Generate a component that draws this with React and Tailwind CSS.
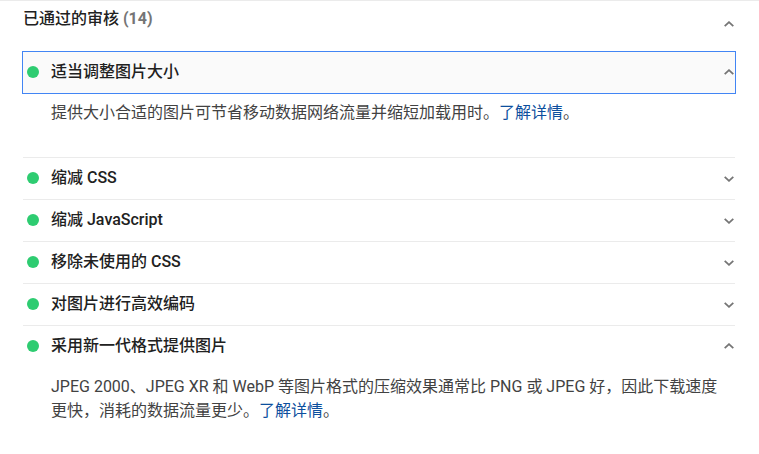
import React, { useState } from "react";

function Chevron({ up }) {
  return (
    <svg viewBox="0 0 10 6" className="mr-px h-1.5 w-2.5 shrink-0" fill="none" stroke="#757575" strokeWidth="1.8" aria-hidden="true">
      <path d={up ? "M0.7 5.2 5 1.2 9.3 5.2" : "M0.7 0.8 5 4.8 9.3 0.8"} />
    </svg>
  );
}

function LearnMore() {
  return (
    <a href="#learn" className="text-[#0d4f9e]">了解详情</a>
  );
}

const audits = [
  {
    title: "适当调整图片大小",
    open: true,
    active: true,
    body: "提供大小合适的图片可节省移动数据网络流量并缩短加载用时。",
  },
  { title: "缩减 CSS" },
  { title: "缩减 JavaScript" },
  { title: "移除未使用的 CSS" },
  { title: "对图片进行高效编码" },
  {
    title: "采用新一代格式提供图片",
    open: true,
    body: "JPEG 2000、JPEG XR 和 WebP 等图片格式的压缩效果通常比 PNG 或 JPEG 好，因此下载速度更快，消耗的数据流量更少。",
  },
];

function Audit({ title, body, active, open: initial = false }) {
  const [open, setOpen] = useState(initial);
  return (
    <li className={active ? "" : "border-t border-[#ebebeb]"}>
      <button
        type="button"
        aria-expanded={open}
        onClick={() => setOpen(!open)}
        className={
          active
            ? "-mx-px flex h-[43px] w-[calc(100%+2px)] items-center border border-[#4285f4] bg-[#fafafa] pl-1 text-left outline-none"
            : "flex h-[41px] w-full items-center pl-1 text-left"
        }
      >
        <span className="flex flex-1 items-center gap-3 pb-0.5 font-medium">
          <span className="size-3 shrink-0 rounded-full bg-[#2ecc71]" />
          {title}
        </span>
        <span className={open ? "pb-0.5" : ""}>
          <Chevron up={open} />
        </span>
      </button>
      {open && body && (
        <p className={active ? "pt-[7px] pr-3 pb-8 pl-7 leading-6 text-[#424242]" : "pt-2 pr-3 pb-8 pl-7 leading-6 text-[#424242]"}>
          {body}
          <LearnMore />。
        </p>
      )}
    </li>
  );
}

export default function App() {
  return (
    <main className="border-t border-[#ebebeb] bg-white pr-6 pl-[23px] font-[Roboto,'Noto_Sans_CJK_SC',sans-serif] text-base text-[#212121]">
      <button type="button" className="flex h-[50px] w-full items-start justify-between pt-1.5 text-left">
        <span className="font-medium">
          已通过的审核 <span className="font-bold text-[#757575]">(14)</span>
        </span>
        <span className="pt-3.5"><Chevron up /></span>
      </button>
      <ul>
        {audits.map((audit) => (
          <Audit key={audit.title} {...audit} />
        ))}
      </ul>
    </main>
  );
}
